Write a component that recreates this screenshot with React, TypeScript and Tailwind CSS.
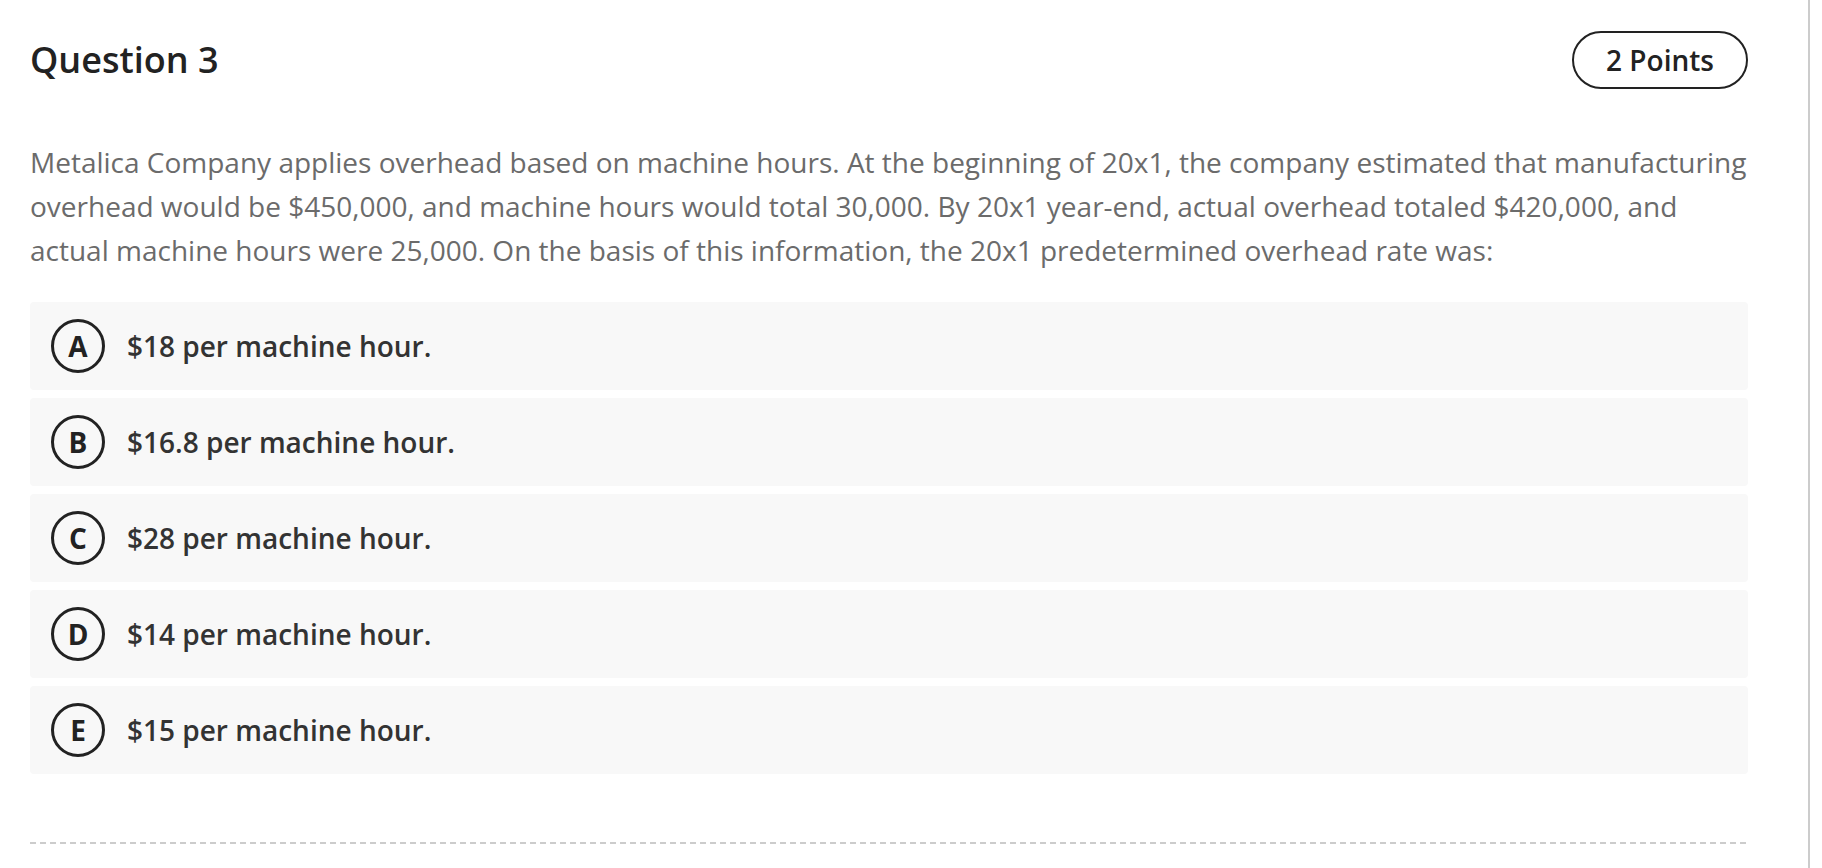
import React from 'react'

const options = [
  { key: 'A', label: '$18 per machine hour.' },
  { key: 'B', label: '$16.8 per machine hour.' },
  { key: 'C', label: '$28 per machine hour.' },
  { key: 'D', label: '$14 per machine hour.' },
  { key: 'E', label: '$15 per machine hour.' },
]

export default function App() {
  return (
    <div className="h-[868px] w-full bg-white font-['Open_Sans',sans-serif] overflow-hidden">
      <div className="h-full w-[1810px] border-r-2 border-[#cccccc]">
        <div className="ml-[30px] w-[1718px] pt-[31px]">
          {/* Header */}
          <div className="flex items-center justify-between">
            <h1 className="text-[36px] leading-[1.2] font-semibold text-[#222222]">Question 3</h1>
            <div className="flex h-[58px] w-[176px] items-center justify-center rounded-full border-2 border-[#222222] text-[28px] font-semibold text-[#222222]">
              2 Points
            </div>
          </div>

          {/* Question text */}
          <p className="mt-[51px] text-[28px] leading-[44px] text-[#6b6b6b]">
            Metalica Company applies overhead based on machine hours. At the beginning of 20x1, the company estimated that manufacturing
            overhead would be $450,000, and machine hours would total 30,000. By 20x1 year-end, actual overhead totaled $420,000, and
            actual machine hours were 25,000. On the basis of this information, the 20x1 predetermined overhead rate was:
          </p>

          {/* Options */}
          <div className="mt-[30px] flex flex-col gap-[8px]">
            {options.map((o) => (
              <div key={o.key} className="flex h-[88px] items-center rounded-[4px] bg-[#f8f8f8] pl-[21px]">
                <div className="flex h-[54px] w-[54px] shrink-0 items-center justify-center rounded-full border-[3px] border-[#222222] text-[28px] font-bold text-[#222222]">
                  {o.key}
                </div>
                <span className="ml-[22px] text-[28px] font-semibold text-[#333333]">{o.label}</span>
              </div>
            ))}
          </div>

          {/* Divider */}
          <div className="mt-[68px] h-[2px] w-full bg-[linear-gradient(to_right,#cccccc_6px,transparent_6px)] bg-[length:10px_2px] bg-repeat-x" />
        </div>
      </div>
    </div>
  )
}
